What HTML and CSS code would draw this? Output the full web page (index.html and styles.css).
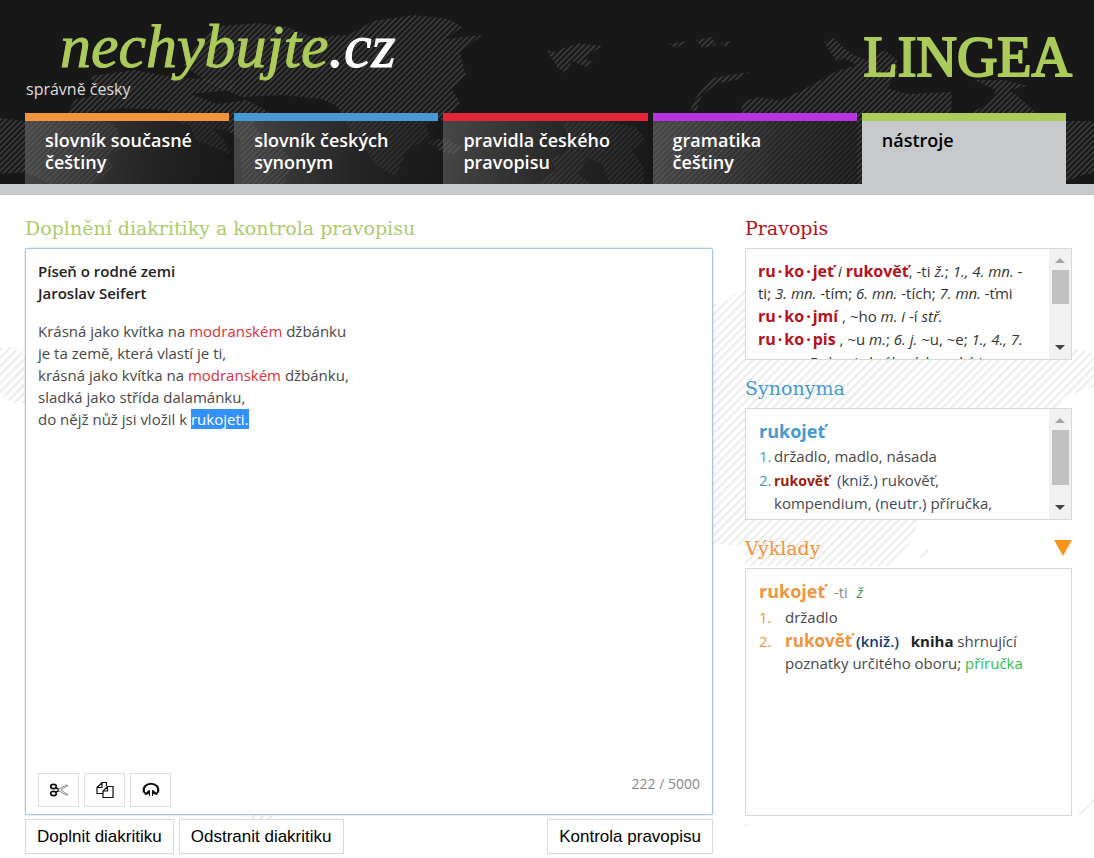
FILE: index.html
```html
<!DOCTYPE html>
<html lang="cs">
<head>
<meta charset="utf-8">
<title>nechybujte.cz – nástroje</title>
<link rel="stylesheet" href="styles.css">
</head>
<body>
<header class="site-header">
  <svg class="header-map" width="1094" height="184" aria-hidden="true">
    <defs>
      <pattern id="dark-stripes" width="4" height="4" patternUnits="userSpaceOnUse" patternTransform="rotate(45)">
        <rect width="1.6" height="4" fill="#404040"/>
      </pattern>
    </defs>
    <g fill="url(#dark-stripes)">
      <path d="M0 118l25 3 60-4 30 8 10 22-18 8 6 12-20 17H50L25 172 0 174z"/>
      <path d="M90 76l45-6 42 8 60 2-6 10-40 4 26 10 30-4 22 12-16 12 10 12-20 4-18-10-44-6-14-14-44-2-58 8 10-16 24-6z"/>
      <path d="M200 40l20-14 38-3 30 4 24 10 36-2 26-14 40-6 34 4 14 8-16 12 36-4-22 18 6 22-14 14 8 14-16 16-18 6 4 12-24 14-10 26-20-12-14-20-14-18-10-20-16-8-40-4-40 2-34-14-24-18z"/>
      <path d="M190 126l20 0 14 14 6 14-14-6-20-8zM240 138l16-8 24 14 12 18-8 22h-42z"/>
      <path d="M546 50l10 2 8-4 14-4-4-1 28 3-12 8-4 6 8 2-8 5-14-6-6 12-8-5zM426 142l20-4 16 10-8 6-12-2z"/>
      <path d="M566 122l40-1 30 6 10 14-14 8 12 20v15h-34l-8-20-14-6-10 16 14 10h-56l20-14-6-12 14-4 8-16-8-10z"/>
      <path d="M668 44l20-3-12 7zM696 40l16-3 4 8-14 3zM720 43l12-2-6 6z"/>
      <path d="M690 110l8-16 14-16 18-3 20-3-14 8-18 3-16 12-6 16zM740 113l4-12 16-4 20 4 30-15 25-14 30-10 20-12 12 10 0 14-10 14 20 6 45-2-1 24H862v68H653v-60z"/>
      <path d="M824 42l10-4 10 10 8 6 15 6-8 6-16-8-6 4zM974 80h30l24 6-18 4 12 10 16 14h-68l20-12 6-12zM1066 121h28v52l-16 3-12 6z"/>
    </g>
  </svg>
  <div class="brand-row">
    <a class="logo" href="#"><span class="logo-name">nechybujte<span class="logo-tld">.cz</span></span><span class="logo-claim">správně česky</span></a>
    <a class="lingea" href="#">LINGEA</a>
  </div>
  <nav class="tabs">
    <a class="tab tab-orange" href="#">slovník současné češtiny</a>
    <a class="tab tab-blue" href="#">slovník českých synonym</a>
    <a class="tab tab-red" href="#">pravidla českého pravopisu</a>
    <a class="tab tab-purple" href="#">gramatika<br>češtiny</a>
    <a class="tab tab-active" href="#" aria-current="page">nástroje</a>
  </nav>
</header>
<main class="page">
  <svg class="page-map" width="1094" height="663" aria-hidden="true">
    <defs>
      <pattern id="light-stripes" width="6" height="6" patternUnits="userSpaceOnUse" patternTransform="rotate(45)">
        <rect width="2.4" height="6" fill="#ededed"/>
      </pattern>
    </defs>
    <g fill="url(#light-stripes)">
      <path d="M0 153l12-1 14 8v48H12L0 200z"/>
      <path d="M712 110l18-6 4-6 12-4v60l2 10h320l8-10 18 4v34l-30 10-8 12v97H925l-8 20-9 20-20 20H745v-20l-33-2z"/>
      <path d="M246 623l12-10h22l-8 12zM1078 620l16-16v6l-10 10zM918 362l10-10v6l-6 6zM742 632l6-4v3z"/>
    </g>
  </svg>
  <section class="editor-col">
    <h1 class="heading heading-green">Doplnění diakritiky a kontrola pravopisu</h1>
    <div class="editor">
      <div class="editor-text" role="textbox" aria-multiline="true" aria-label="Text" contenteditable="true" spellcheck="false">
        <p class="poem-title">Píseň o rodné zemi<br>Jaroslav Seifert</p>
        <p class="poem">Krásná jako kvítka na <span class="typo">modranském</span> džbánku<br>je ta země, která vlastí je ti,<br>krásná jako kvítka na <span class="typo">modranském</span> džbánku,<br>sladká jako střída dalamánku,<br>do nějž nůž jsi vložil k <mark class="selected">rukojeti.</mark></p>
      </div>
      <div class="editor-bar">
        <div class="tools">
          <button class="tool" type="button" aria-label="Vyjmout">
            <svg width="20" height="20" viewBox="0 0 20 20" fill="none" stroke="#111"><ellipse cx="4.500" cy="6.500" rx="2.800" ry="2.100" stroke-width="1.700"/><ellipse cx="4.500" cy="13.500" rx="2.800" ry="2.100" stroke-width="1.700"/><path d="M6.800 7.800l3.200 1.700M6.800 12.200l3.200-1.700" stroke-width="1.500"/><path d="M9.500 9.500L17 5l1.800.4L12 10l6.800 4.600-1.800.4-7.500-4.500z" stroke="#666" stroke-width=".8"/></svg>
          </button>
          <button class="tool" type="button" aria-label="Kopírovat">
            <svg width="20" height="20" viewBox="0 0 20 20" fill="none" stroke="#111" stroke-width="1.200"><path d="M8 13.500H2V7.500L7 2.500h4.500V6M7 2.500v5H2"/><path d="M12.500 6.500H18v11H8v-6.500zM12.500 6.500V11H8"/></svg>
          </button>
          <button class="tool" type="button" aria-label="Přečíst">
            <svg width="20" height="20" viewBox="0 0 20 20" fill="none" stroke="#111"><path d="M3 12.500C1.500 7 5.500 3.700 10 3.700s8.500 3.300 7 8.800" stroke-width="2"/><path d="M2 10.500L4 15l4-1v2h1v-6H8L5 12.500zM18 10.500L16 15l-4-1v2h-1v-6h1l3 2.500z" fill="#111" stroke="none"/></svg>
          </button>
        </div>
        <span class="counter">222 / 5000</span>
      </div>
    </div>
    <div class="actions">
      <button class="action" type="button">Doplnit diakritiku</button>
      <button class="action" type="button">Odstranit diakritiku</button>
      <button class="action action-check" type="button">Kontrola pravopisu</button>
    </div>
  </section>
  <aside class="side">
    <section class="panel">
      <h2 class="heading heading-red">Pravopis</h2>
      <div class="box box-short">
        <div class="box-body spelling">
          <p><b>ru<span class="dot">·</span>ko<span class="dot">·</span>jeť</b> <i>i</i> <b>rukověť</b>, -ti <i>ž.</i>; <i>1., 4. mn.</i> -<br>ti; <i>3. mn.</i> -tím; <i>6. mn.</i> -tích; <i>7. mn.</i> -ťmi</p>
          <p><b>ru<span class="dot">·</span>ko<span class="dot">·</span>jmí</b> , ~ho <i>m. i</i> -í <i>stř.</i></p>
          <p><b>ru<span class="dot">·</span>ko<span class="dot">·</span>pis</b> , ~u <i>m.</i>; <i>6. j.</i> ~u, ~e; <i>1., 4., 7.</i></p>
          <p class="indent">~y; Rukopis královédvorský i</p>
        </div>
        <div class="scroll" aria-hidden="true"><span class="scroll-up"></span><span class="scroll-thumb"></span><span class="scroll-down"></span></div>
      </div>
    </section>
    <section class="panel">
      <h2 class="heading heading-blue">Synonyma</h2>
      <div class="box box-short">
        <div class="box-body entry synonyms">
          <h3 class="word">rukojeť</h3>
          <ol class="senses">
            <li><span class="num">1.</span><span>držadlo, madlo, násada</span></li>
            <li><span class="num">2.</span><span><b>rukověť</b>&nbsp; <span class="note">(kniž.)</span> rukověť,<br>kompendium, <span class="note">(neutr.)</span> příručka,</span></li>
          </ol>
        </div>
        <div class="scroll scroll-long" aria-hidden="true"><span class="scroll-up"></span><span class="scroll-thumb"></span><span class="scroll-down"></span></div>
      </div>
    </section>
    <section class="panel">
      <div class="panel-head">
        <h2 class="heading heading-orange">Výklady</h2>
        <button class="toggle" type="button" aria-label="Sbalit výklady"><svg width="18" height="16" viewBox="0 0 18 16"><path d="M0 0h18L9 16z" fill="#f7941e"/></svg></button>
      </div>
      <div class="box box-tall">
        <div class="box-body entry meanings">
          <h3 class="word">rukojeť <span class="ending">-ti</span> <i class="gender">ž</i></h3>
          <ol class="senses">
            <li><span class="num">1.</span><span>držadlo</span></li>
            <li><span class="num">2.</span><span><b class="headword">rukověť</b> <span class="label">(kniž.)</span> &nbsp; <b>kniha</b> shrnující<br>poznatky určitého oboru; <a class="ref" href="#">příručka</a></span></li>
          </ol>
        </div>
      </div>
    </section>
  </aside>
</main>
</body>
</html>
```
FILE: styles.css
```css
* { box-sizing: border-box; }
body {
  margin: 0;
  background: #fff;
  color: #484848;
  font: 400 15px/22px "Open Sans", "Noto Sans", sans-serif;
}
p, h1, h2, h3, ol { margin: 0; padding: 0; }
a { text-decoration: none; }
button { font: inherit; margin: 0; cursor: pointer; }

.site-header {
  position: relative;
  background: #181818;
  border-bottom: 11px solid #c8c9cb;
  overflow: hidden;
}
.header-map { position: absolute; left: 0; top: 0; }
.brand-row {
  position: relative;
  display: flex;
  justify-content: space-between;
  align-items: flex-start;
  height: 113px;
  padding: 14px 22px 0 26px;
}
.logo { display: flex; flex-direction: column; }
.logo-name {
  padding-left: 34px;
  font: italic 400 62px/64px "Liberation Serif", serif;
  color: #abcb5a;
  -webkit-text-stroke: 1px currentColor;
}
.logo-tld { color: #fff; }
.logo-claim { font-size: 16px; line-height: 22px; color: #ddd; }
.lingea {
  font: 400 56px/60px "Liberation Serif", serif;
  color: #abcb5a;
  -webkit-text-stroke: 2px #abcb5a;
  padding-top: 13px;
}
.tabs {
  position: relative;
  display: grid;
  grid-template-columns: repeat(5, 1fr);
  gap: 5px;
  padding: 0 28px 0 25px;
}
.tab {
  height: 71px;
  padding: 8px 20px 0;
  border-top: 8px solid;
  background: linear-gradient(100deg, rgba(110, 110, 110, .55), rgba(50, 50, 50, .5) 60%, rgba(24, 24, 24, .5));
  font: 600 18px/22px "Open Sans", "Noto Sans", sans-serif;
}
.tab { color: #fff; }
.tab-orange { border-color: #f2943d; }
.tab-blue { border-color: #4799d2; }
.tab-red { border-color: #e32636; }
.tab-purple { border-color: #b635e0; }
.tab-active { border-color: #abcb5a; background: #c8c9cb; color: #000; }

.page {
  position: relative;
  display: grid;
  grid-template-columns: minmax(0, 1fr) 327px;
  gap: 32px;
  padding: 13px 22px 4px 25px;
  overflow: hidden;
}
.page-map { position: absolute; left: 0; top: 0; }
.editor-col, .side { position: relative; }
.editor-col { display: flex; flex-direction: column; }
.heading { font: 400 19px/40px "DejaVu Serif", serif; }
.heading-green { color: #abcb6c; }
.heading-red { color: #b5121b; }
.heading-blue { color: #4799d2; }
.heading-orange { color: #f2943d; }

.editor {
  display: flex;
  flex-direction: column;
  flex: 1;
  min-height: 567px;
  padding: 11px 12px 7px;
  border: 1px solid #a9c6e8;
  border-radius: 2px;
  box-shadow: 0 0 2px #a9c6e8;
  background: #fff;
}
.editor-text { flex: 1; outline: none; }
.poem-title { font-weight: 600; color: #222; margin-bottom: 16px; }
.typo { color: #e0303a; }
.selected { background: #3390ff; color: #fff; }
.editor-bar { display: flex; justify-content: space-between; align-items: flex-start; }
.tools { display: flex; gap: 5px; }
.tool {
  display: flex;
  align-items: center;
  justify-content: center;
  width: 41px;
  height: 34px;
  padding: 0;
  border: 1px solid #ddd;
  background: #fff;
}
.counter { font-size: 14px; color: #888; }
.actions { display: flex; gap: 5px; padding-top: 4px; }
.action {
  height: 35px;
  padding: 0 11px;
  border: 1px solid #d9d9d9;
  background: #fff;
  color: #000;
  font: 17px/20px "Liberation Sans", Arial, sans-serif;
}
.action-check { margin-left: auto; }

.side { display: flex; flex-direction: column; gap: 8px; }
.panel-head { display: flex; justify-content: space-between; align-items: center; }
.toggle { display: flex; padding: 0; border: 0; background: none; }
.box { display: flex; border: 1px solid #d8d8d8; background: #fff; overflow: hidden; }
.box-short { height: 112px; }
.box-tall { height: 248px; }
.box-body { flex: 1; padding: 11px 12px; white-space: nowrap; overflow: hidden; }
.spelling { display: flex; flex-direction: column; gap: 1px; color: #333; }
.spelling b { font-size: 16px; font-weight: 700; color: #b5121b; }
.dot { margin: 0 2px; }
.indent { padding-left: 28px; }
.scroll {
  display: flex;
  flex-direction: column;
  align-items: center;
  width: 22px;
  background: #f1f1f1;
}
.scroll-up { margin: 9px 0 7px; border: 5px solid transparent; border-top: 0; border-bottom-color: #a3a3a3; }
.scroll-thumb { width: 17px; height: 34px; background: #c1c1c1; }
.scroll-long .scroll-thumb { height: 55px; }
.scroll-down { margin: auto 0 9px; border: 5px solid transparent; border-bottom: 0; border-top-color: #444; }

.word { font-size: 18px; line-height: 24px; font-weight: 700; }
.senses { list-style: none; }
.senses li { display: flex; padding-top: 2px; }
.box-body.entry { padding: 10px 13px; }
.synonyms .word, .synonyms .num { color: #4799d2; }
.num { flex: none; }
.synonyms .num { width: 15px; }
.synonyms b { color: #9c1c0c; font-size: 14px; font-weight: 700; }
.note { color: #2f4a70; }
.meanings .word, .meanings .num, .headword { color: #f2943d; }
.meanings .num { width: 26px; }
.meanings b { font-weight: 700; color: #222; }
.meanings .headword { font-size: 17px; color: #f2943d; }
.meanings .word .ending { margin: 0 4px; font-size: 15px; font-weight: 400; color: #888; }
.gender { font-size: 15px; font-weight: 400; color: #3d9a50; }
.meanings .label { color: #123a78; font-weight: 600; }
.ref { color: #2fc04a; }
```
